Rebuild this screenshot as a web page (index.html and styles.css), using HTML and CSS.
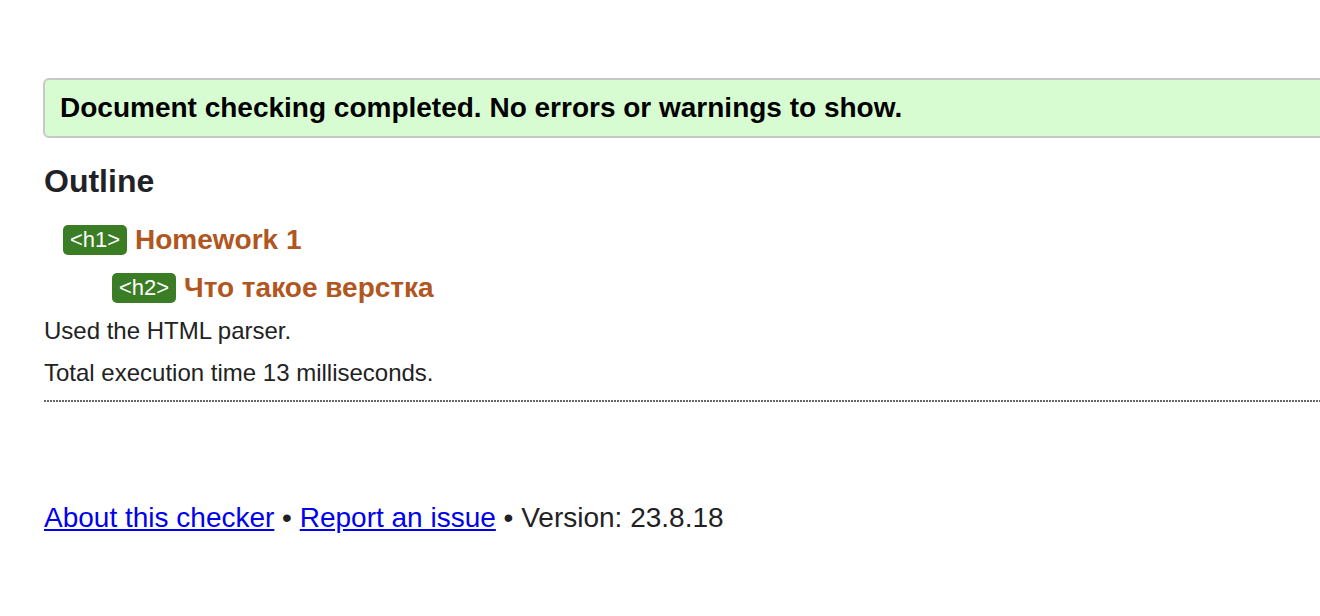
FILE: index.html
```html
<!DOCTYPE html>
<html lang="en">
<head>
<meta charset="utf-8">
<title>Nu Html Checker</title>
<link rel="stylesheet" href="styles.css">
</head>
<body>
<main class="page">
  <div class="success">Document checking completed. No errors or warnings to show.</div>
  <h2 class="outline-title">Outline</h2>
  <ol class="outline">
    <li class="level1">
      <span class="badge">&lt;h1&gt;</span> <span class="heading">Homework 1</span>
      <ol class="outline">
        <li class="level2">
          <span class="badge">&lt;h2&gt;</span> <span class="heading">Что такое верстка</span>
        </li>
      </ol>
    </li>
  </ol>
  <p class="info">Used the HTML parser.</p>
  <p class="info">Total execution time 13 milliseconds.</p>
  <div class="dotted"></div>
  <p class="footer"><a href="#">About this checker</a> • <a href="#">Report an issue</a> • Version: 23.8.18</p>
</main>
</body>
</html>
```
FILE: styles.css
```css
html, body {
  margin: 0;
  padding: 0;
  overflow: hidden;
  background: #fff;
}
body {
  font-family: "Liberation Sans", Arial, Helvetica, sans-serif;
  color: #222;
}
.page {
  padding: 78px 0 0 43px;
  width: 1320px;
}
.success {
  background: #d8fcd2;
  border: 2px solid #c8c8c8;
  border-radius: 6px;
  padding: 11px 15px 11px;
  font-size: 28px;
  line-height: 34px;
  font-weight: bold;
  color: #000;
  white-space: nowrap;
}
.outline-title {
  margin: 24px 0 0 1px;
  font-size: 32px;
  line-height: 38px;
  font-weight: bold;
  color: #1f2328;
}
.outline {
  list-style: none;
  margin: 0;
  padding: 0;
}
.page > .outline {
  margin-top: 16px;
}
.level1 {
  padding-left: 20px;
}
.level2 {
  padding-left: 49px;
}
.level1, .level2 {
  line-height: 48px;
  font-size: 28px;
}
.badge {
  display: inline-block;
  vertical-align: 2px;
  background: #3a7d24;
  color: #fff;
  font-size: 22px;
  line-height: 30px;
  padding: 0 7px;
  border-radius: 5px;
  font-weight: normal;
}
.heading {
  color: #b1561f;
  font-weight: bold;
}
.info {
  margin: 4px 0 12px 1px;
  font-size: 24px;
  line-height: 30px;
  color: #222;
}
.info + .info {
  margin-top: 0;
}
.dotted {
  margin: 5px 0 0 1px;
  height: 2px;
  background: repeating-linear-gradient(to right, #666 0 2px, transparent 2px 3px);
}
.footer {
  margin: 99px 0 0 1px;
  font-size: 28px;
  line-height: 34px;
  color: #222;
}
.footer a {
  color: #0000ee;
  text-decoration: underline;
}
```
